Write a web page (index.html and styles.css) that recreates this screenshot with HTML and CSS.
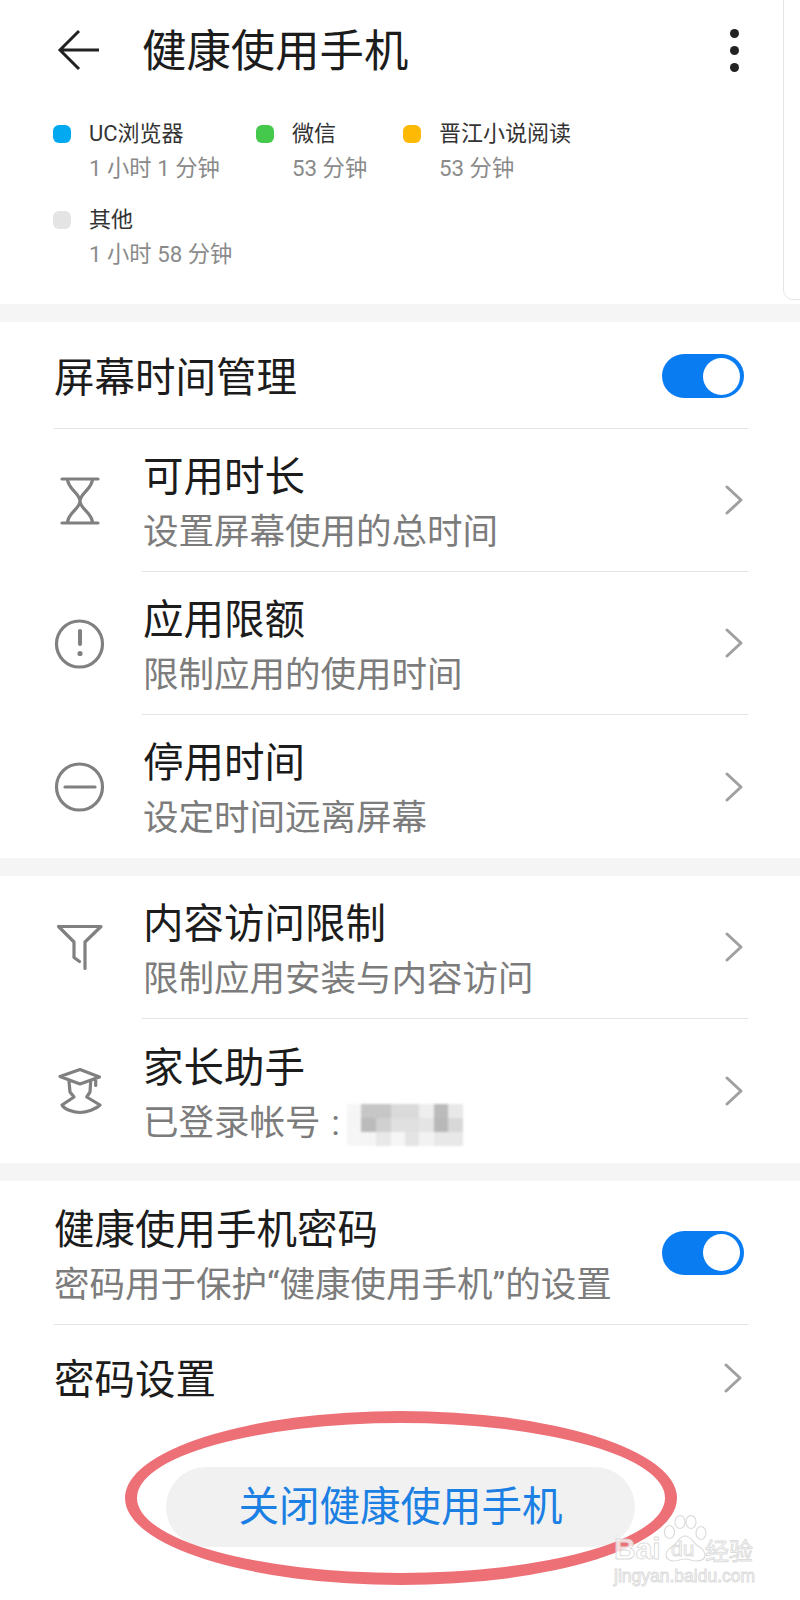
FILE: index.html
```html
<!DOCTYPE html>
<html lang="zh-CN">
<head>
  <meta charset="UTF-8">
  <meta name="viewport" content="width=device-width, initial-scale=1.0">
  <title>健康使用手机</title>
  <link rel="stylesheet" href="styles.css">
</head>
<body>

  <div class="page">
    <div class="edge"></div>

    <div class="header">
      <svg class="back" width="44" height="44" viewBox="0 0 44 44"><path d="M22 3 3 22l19 19M3 22h39"/></svg>
      <h1>健康使用手机</h1>
      <div class="more"><span></span><span></span><span></span></div>
    </div>

    <div class="legend">
      <div class="legend-item">
        <i class="dot dot-blue"></i>
        <div><div class="legend-name">UC浏览器</div><div class="legend-time">1 小时 1 分钟</div></div>
      </div>
      <div class="legend-item">
        <i class="dot dot-green"></i>
        <div><div class="legend-name">微信</div><div class="legend-time">53 分钟</div></div>
      </div>
      <div class="legend-item">
        <i class="dot dot-yellow"></i>
        <div><div class="legend-name">晋江小说阅读</div><div class="legend-time">53 分钟</div></div>
      </div>
      <div class="legend-item">
        <i class="dot dot-grey"></i>
        <div><div class="legend-name">其他</div><div class="legend-time">1 小时 58 分钟</div></div>
      </div>
    </div>

    <div class="band"></div>

    <div class="plain-row switch-row">
      <span class="title">屏幕时间管理</span>
      <div class="toggle"><span></span></div>
    </div>

    <div class="row">
      <svg class="icon" width="60" height="60" viewBox="0 0 60 60"><path d="M12 8h36M12 52h36M17.5 8c0 10 12.5 14 12.5 22s-12.5 12-12.5 22M42.5 8c0 10-12.5 14-12.5 22s12.5 12 12.5 22"/></svg>
      <div class="row-body">
        <div class="texts"><div class="title">可用时长</div><div class="sub">设置屏幕使用的总时间</div></div>
        <svg class="chevron" width="18" height="30" viewBox="0 0 18 30"><path d="m2 2 14 13L2 28"/></svg>
      </div>
    </div>
    <div class="row">
      <svg class="icon" width="60" height="60" viewBox="0 0 60 60"><circle cx="29.5" cy="30" r="23"/><path class="thick" d="M30 17v13"/><circle class="fill" cx="30" cy="39.5" r="2.6"/></svg>
      <div class="row-body">
        <div class="texts"><div class="title">应用限额</div><div class="sub">限制应用的使用时间</div></div>
        <svg class="chevron" width="18" height="30" viewBox="0 0 18 30"><path d="m2 2 14 13L2 28"/></svg>
      </div>
    </div>
    <div class="row last">
      <svg class="icon" width="60" height="60" viewBox="0 0 60 60"><circle cx="29.5" cy="30" r="23"/><path d="M15 30h30"/></svg>
      <div class="row-body">
        <div class="texts"><div class="title">停用时间</div><div class="sub">设定时间远离屏幕</div></div>
        <svg class="chevron" width="18" height="30" viewBox="0 0 18 30"><path d="m2 2 14 13L2 28"/></svg>
      </div>
    </div>

    <div class="band"></div>

    <div class="row">
      <svg class="icon" width="60" height="60" viewBox="0 0 60 60"><path d="M8.500 8.500H51L35 24v26.500M8.500 8.500 24 24v15.500l5.500 4"/></svg>
      <div class="row-body">
        <div class="texts"><div class="title">内容访问限制</div><div class="sub">限制应用安装与内容访问</div></div>
        <svg class="chevron" width="18" height="30" viewBox="0 0 18 30"><path d="m2 2 14 13L2 28"/></svg>
      </div>
    </div>
    <div class="row last tall">
      <svg class="icon" width="60" height="60" viewBox="0 0 60 60"><path d="m10 15.500 20-7 19.500 7.500-19.500 7zM45.700 16.500v8M19 20.500 20 31l4 5-12 8c2 4 11 7.500 18 7.500s16-3.500 20-7.500l-13.300-8 3.300-5 .7-10.500"/></svg>
      <div class="row-body">
        <div class="texts">
          <div class="title">家长助手</div>
          <div class="sub account">已登录帐号<span class="colon">:</span>
            <svg class="mosaic" width="126" height="44" viewBox="0 0 126 44">
              <rect width="14" height="42" fill="#f6f6f6"/>
              <rect x="14" width="30" height="14" fill="#c6c6c6"/><rect x="44" width="28" height="14" fill="#dadada"/><rect x="72" width="15" height="14" fill="#eeeeee"/><rect x="87" width="14" height="14" fill="#bbbbbb"/><rect x="101" width="15" height="14" fill="#e8e8e8"/>
              <rect x="14" y="14" width="15" height="14" fill="#bbbbbb"/><rect x="29" y="14" width="15" height="14" fill="#d0d0d0"/><rect x="44" y="14" width="28" height="14" fill="#e0e0e0"/><rect x="72" y="14" width="15" height="14" fill="#e4e4e4"/><rect x="87" y="14" width="14" height="14" fill="#b8b8b8"/><rect x="101" y="14" width="15" height="14" fill="#d8d8d8"/>
              <rect x="14" y="28" width="15" height="14" fill="#f5f5f5"/><rect x="29" y="28" width="15" height="14" fill="#e8e8e8"/><rect x="44" y="28" width="14" height="14" fill="#f6f6f6"/><rect x="58" y="28" width="14" height="14" fill="#e4e4e4"/><rect x="72" y="28" width="15" height="14" fill="#f2f2f2"/><rect x="87" y="28" width="29" height="14" fill="#e8e8e8"/>
            </svg>
          </div>
        </div>
        <svg class="chevron" width="18" height="30" viewBox="0 0 18 30"><path d="m2 2 14 13L2 28"/></svg>
      </div>
    </div>

    <div class="band"></div>

    <div class="plain-row password-row">
      <div class="texts"><div class="title">健康使用手机密码</div><div class="sub">密码用于保护“健康使用手机”的设置</div></div>
      <div class="toggle"><span></span></div>
    </div>
    <div class="plain-row link-row">
      <span class="title">密码设置</span>
      <svg class="chevron" width="18" height="30" viewBox="0 0 18 30"><path d="m2 2 14 13L2 28"/></svg>
    </div>

    <div class="button-wrap">
      <div class="off-btn">关闭健康使用手机</div>
      <div class="red-ring"></div>
      <div class="watermark">
        <svg class="paw" width="44" height="50" viewBox="0 0 44 50">
          <ellipse cx="5.500" cy="17" rx="5" ry="6.500"/><ellipse cx="16" cy="7" rx="5" ry="6.500"/><ellipse cx="27" cy="7" rx="5" ry="6.500"/><ellipse cx="37" cy="18" rx="5" ry="6.500"/>
          <path d="M21 21c6 0 8 7 13 10 5 3 7 6 7 9 0 5-5 6-9 6-4 0-7-2-11-2s-7 2-11 2c-4 0-8-2-8-6 0-3 2-6 7-9 5-3 6-10 12-10z"/>
        </svg>
        <div class="wm-brand"><span class="wm-bai">Bai</span><span class="wm-du">du</span><span class="wm-cn">经验</span></div>
        <div class="wm-url">jingyan.baidu.com</div>
      </div>
    </div>
  </div>

</body>
</html>
```

FILE: styles.css
```css
* {
  margin: 0;
  padding: 0;
  box-sizing: border-box;
}

body {
  font-family: Roboto, 'Noto Sans CJK SC', sans-serif;
  background-color: #fff;
  color: #1c1c1c;
}

.page {
  position: relative;
  width: 800px;
  height: 1600px;
  overflow: hidden;
}

/* faint edge of the card behind, top right */
.edge {
  position: absolute;
  top: -10px;
  right: -10px;
  width: 27px;
  height: 310px;
  border: 1px solid #e6e6e6;
  border-radius: 10px;
}

.header {
  display: flex;
  align-items: center;
  height: 100px;
  padding-left: 57px;
}

.back {
  fill: none;
  stroke: #222;
  stroke-width: 3;
}

.header h1 {
  font-size: 44.4px;
  font-weight: 400;
  line-height: 96px;
  margin: 4px 0 0 41px;
  flex: 1;
}

.more {
  display: flex;
  flex-direction: column;
  gap: 8px;
  margin-right: 61px;
}

.more span {
  width: 9px;
  height: 9px;
  background-color: #222;
  border-radius: 50%;
}

.legend {
  display: grid;
  grid-template-columns: 203px 147px auto;
  grid-auto-rows: 86px;
  height: 204px;
  padding: 17px 0 0 53px;
}

.legend-item {
  display: flex;
  gap: 18px;
}

.dot {
  flex: none;
  width: 18px;
  height: 18px;
  border-radius: 6px;
  margin-top: 8px;
}

.dot-blue { background-color: #03a9f0; }
.dot-green { background-color: #45c94d; }
.dot-yellow { background-color: #fdb904; }
.dot-grey { background-color: #e4e4e4; }

.legend-name {
  font-size: 22px;
  line-height: 34px;
  color: #333;
}

.legend-time {
  font-size: 22.3px;
  line-height: 34px;
  color: #8a8a8a;
}

.band {
  height: 18px;
  background-color: #f5f5f5;
}

.title {
  font-size: 40.5px;
  line-height: 55px;
}

.sub {
  font-size: 35.5px;
  line-height: 55px;
  color: #7c7c7c;
  white-space: nowrap;
}

.plain-row {
  display: flex;
  align-items: center;
  justify-content: space-between;
  margin: 0 52px 0 54px;
}

.switch-row {
  height: 107px;
  padding: 6px 4px 0 0;
  border-bottom: 1px solid #e4e4e4;
}

.switch-row .toggle {
  margin-top: -4px;
}

.password-row {
  height: 144px;
  padding-right: 4px;
  border-bottom: 1px solid #e4e4e4;
}

.password-row .texts {
  margin-top: 10px;
}

.link-row {
  height: 111px;
  padding-right: 6px;
}

.link-row .chevron {
  margin-bottom: 6px;
}

.toggle {
  display: flex;
  justify-content: flex-end;
  align-items: center;
  width: 82px;
  height: 44px;
  padding-right: 4px;
  background-color: #0a7cf2;
  border-radius: 22px;
}

.toggle span {
  width: 37px;
  height: 37px;
  background-color: #fff;
  border-radius: 50%;
}

.row {
  display: flex;
  align-items: center;
  height: 143px;
  padding: 0 52px 0 50px;
}

.row.tall {
  height: 144px;
}

.icon {
  flex: none;
  width: 60px;
  margin-right: 32px;
  fill: none;
  stroke: #808080;
  stroke-width: 3.2;
  stroke-linecap: round;
  stroke-linejoin: round;
}

.icon .thick {
  stroke-width: 4;
}

.icon .fill {
  fill: #808080;
  stroke: none;
}

.row-body {
  flex: 1;
  display: flex;
  align-items: center;
  justify-content: space-between;
  align-self: stretch;
  padding-right: 5px;
  border-bottom: 1px solid #e4e4e4;
}

.row.last .row-body {
  border-bottom: none;
}

.row-body .texts {
  margin: 9px 0 0 1px;
}

.chevron {
  fill: none;
  stroke: #a0a0a0;
  stroke-width: 3;
  stroke-linecap: round;
  stroke-linejoin: round;
}

.account {
  display: flex;
  align-items: center;
}

.colon {
  width: 30px;
  text-align: center;
}

/* blurred-out account name */
.mosaic {
  margin: 6px 0 0 -4px;
  filter: blur(1px);
}

.button-wrap {
  position: relative;
  padding: 31px 0 0 166px;
}

.off-btn {
  width: 469px;
  height: 80px;
  background-color: #f1f1f1;
  border-radius: 40px;
  color: #1b7fe3;
  font-size: 40.5px;
  line-height: 80px;
  text-align: center;
}

/* hand-drawn red circle around the button */
.red-ring {
  position: absolute;
  left: 125px;
  top: -25px;
  width: 552px;
  height: 174px;
  border: 12px solid #ee7077;
  border-radius: 50%;
}

.watermark {
  position: absolute;
  left: 614px;
  top: 79px;
  width: 145px;
  color: rgba(255, 255, 255, 0.75);
  -webkit-text-stroke: 1px rgba(205, 205, 205, 0.7);
}

.paw {
  position: absolute;
  left: 50px;
  top: 0;
  fill: rgba(255, 255, 255, 0.6);
  stroke: rgba(205, 205, 205, 0.7);
  stroke-width: 1.2;
}

.wm-brand {
  position: relative;
  display: flex;
  align-items: center;
  height: 24px;
  margin-top: 22px;
  font-family: 'Liberation Sans', sans-serif;
  font-size: 30px;
  font-weight: 700;
}

.wm-bai {
  width: 57px;
}

.wm-du {
  width: 34px;
  font-size: 21px;
  font-weight: 400;
}

.wm-cn {
  font-family: 'Noto Sans CJK SC', sans-serif;
  font-size: 24px;
  font-weight: 400;
}

.wm-url {
  margin-top: 5px;
  font-family: 'Liberation Sans', sans-serif;
  font-size: 17.5px;
  line-height: 20px;
  white-space: nowrap;
}
```
